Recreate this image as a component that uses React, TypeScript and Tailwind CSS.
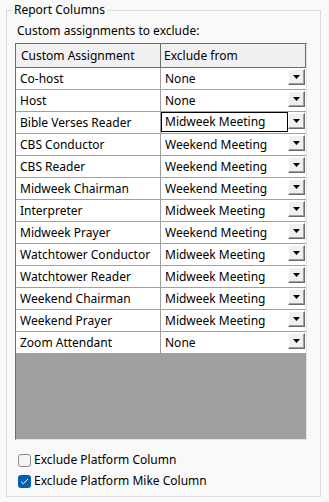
import { type ReactNode } from "react";

const rows: [string, string][] = [
  ["Co-host", "None"],
  ["Host", "None"],
  ["Bible Verses Reader", "Midweek Meeting"],
  ["CBS Conductor", "Weekend Meeting"],
  ["CBS Reader", "Weekend Meeting"],
  ["Midweek Chairman", "Weekend Meeting"],
  ["Interpreter", "Midweek Meeting"],
  ["Midweek Prayer", "Weekend Meeting"],
  ["Watchtower Conductor", "Midweek Meeting"],
  ["Watchtower Reader", "Midweek Meeting"],
  ["Weekend Chairman", "Midweek Meeting"],
  ["Weekend Prayer", "Midweek Meeting"],
  ["Zoom Attendant", "None"],
];

function DropButton(): ReactNode {
  return (
    <div className="mt-[1px] flex h-[16px] w-[17px] shrink-0 items-center justify-center border border-t-white border-l-white border-r-[#696969] border-b-[#696969] bg-[#f0f0f0] shadow-[inset_-1px_-1px_0_#a0a0a0]">
      <svg width="7" height="4" viewBox="0 0 7 4">
        <path d="M0 0h7L3.5 4z" fill="#000" />
      </svg>
    </div>
  );
}

function CheckRow({ label, checked }: { label: string; checked: boolean }): ReactNode {
  return (
    <label className="flex h-[16px] items-center gap-[3px] pl-[11px]">
      {checked ? (
        <span className="flex h-[13px] w-[13px] items-center justify-center rounded-[3px] bg-[#005fb8]">
          <svg width="9" height="7" viewBox="0 0 9 7">
            <path d="M1 3.6 3.3 5.8 8 1" fill="none" stroke="#fff" strokeWidth="1" />
          </svg>
        </span>
      ) : (
        <span className="h-[13px] w-[13px] rounded-[3px] border border-[#8a8a8a] bg-[#f4f4f4]" />
      )}
      <span>{label}</span>
    </label>
  );
}

export default function App(): ReactNode {
  return (
    <div className="h-[502px] w-[329px] bg-[#f9f9f9] pt-[2px] text-[12px] leading-[16px] text-black [font-family:'Noto_Sans',sans-serif]">
      <fieldset className="ml-[6px] w-[315px] border border-[#dcdcdc] pb-[7px]">
        <legend className="ml-[5px] px-[2px]">Report Columns</legend>
        <div className="mt-[5px] pl-[10px]">Custom assignments to exclude:</div>
        <div className="ml-[8px] mt-[4px] flex h-[397px] w-[292px] flex-col border border-t-[#6d6d6d] border-l-[#6d6d6d] border-r-[#e3e3e3] border-b-[#e3e3e3] bg-[#a0a0a0]">
          <div className="flex h-[24px] shrink-0 border-b border-[#6d6d6d] bg-[#f0f0f0]">
            <div className="flex w-[145px] items-center border-r border-[#6d6d6d] pl-[5px]">Custom Assignment</div>
            <div className="flex flex-1 items-center border-r border-[#6d6d6d] pl-[3px]">Exclude from</div>
          </div>
          {rows.map(([name, value], i) => (
            <div key={name} className="flex h-[22px] shrink-0 border-b border-[#a0a0a0] bg-white">
              <div className="flex w-[145px] items-center border-r border-[#a0a0a0] pl-[4px]">{name}</div>
              <div className="flex flex-1 pr-[1px]">
                <div
                  className={
                    i === 2
                      ? "flex flex-1 items-center border border-black pl-[3px] mb-[1px]"
                      : "flex flex-1 items-center pl-[4px]"
                  }
                >
                  {value}
                </div>
                <DropButton />
              </div>
            </div>
          ))}
          <div className="flex-1" />
        </div>
        <div className="mt-[12px] flex flex-col gap-[5px]">
          <CheckRow label="Exclude Platform Column" checked={false} />
          <CheckRow label="Exclude Platform Mike Column" checked={true} />
        </div>
      </fieldset>
    </div>
  );
}
